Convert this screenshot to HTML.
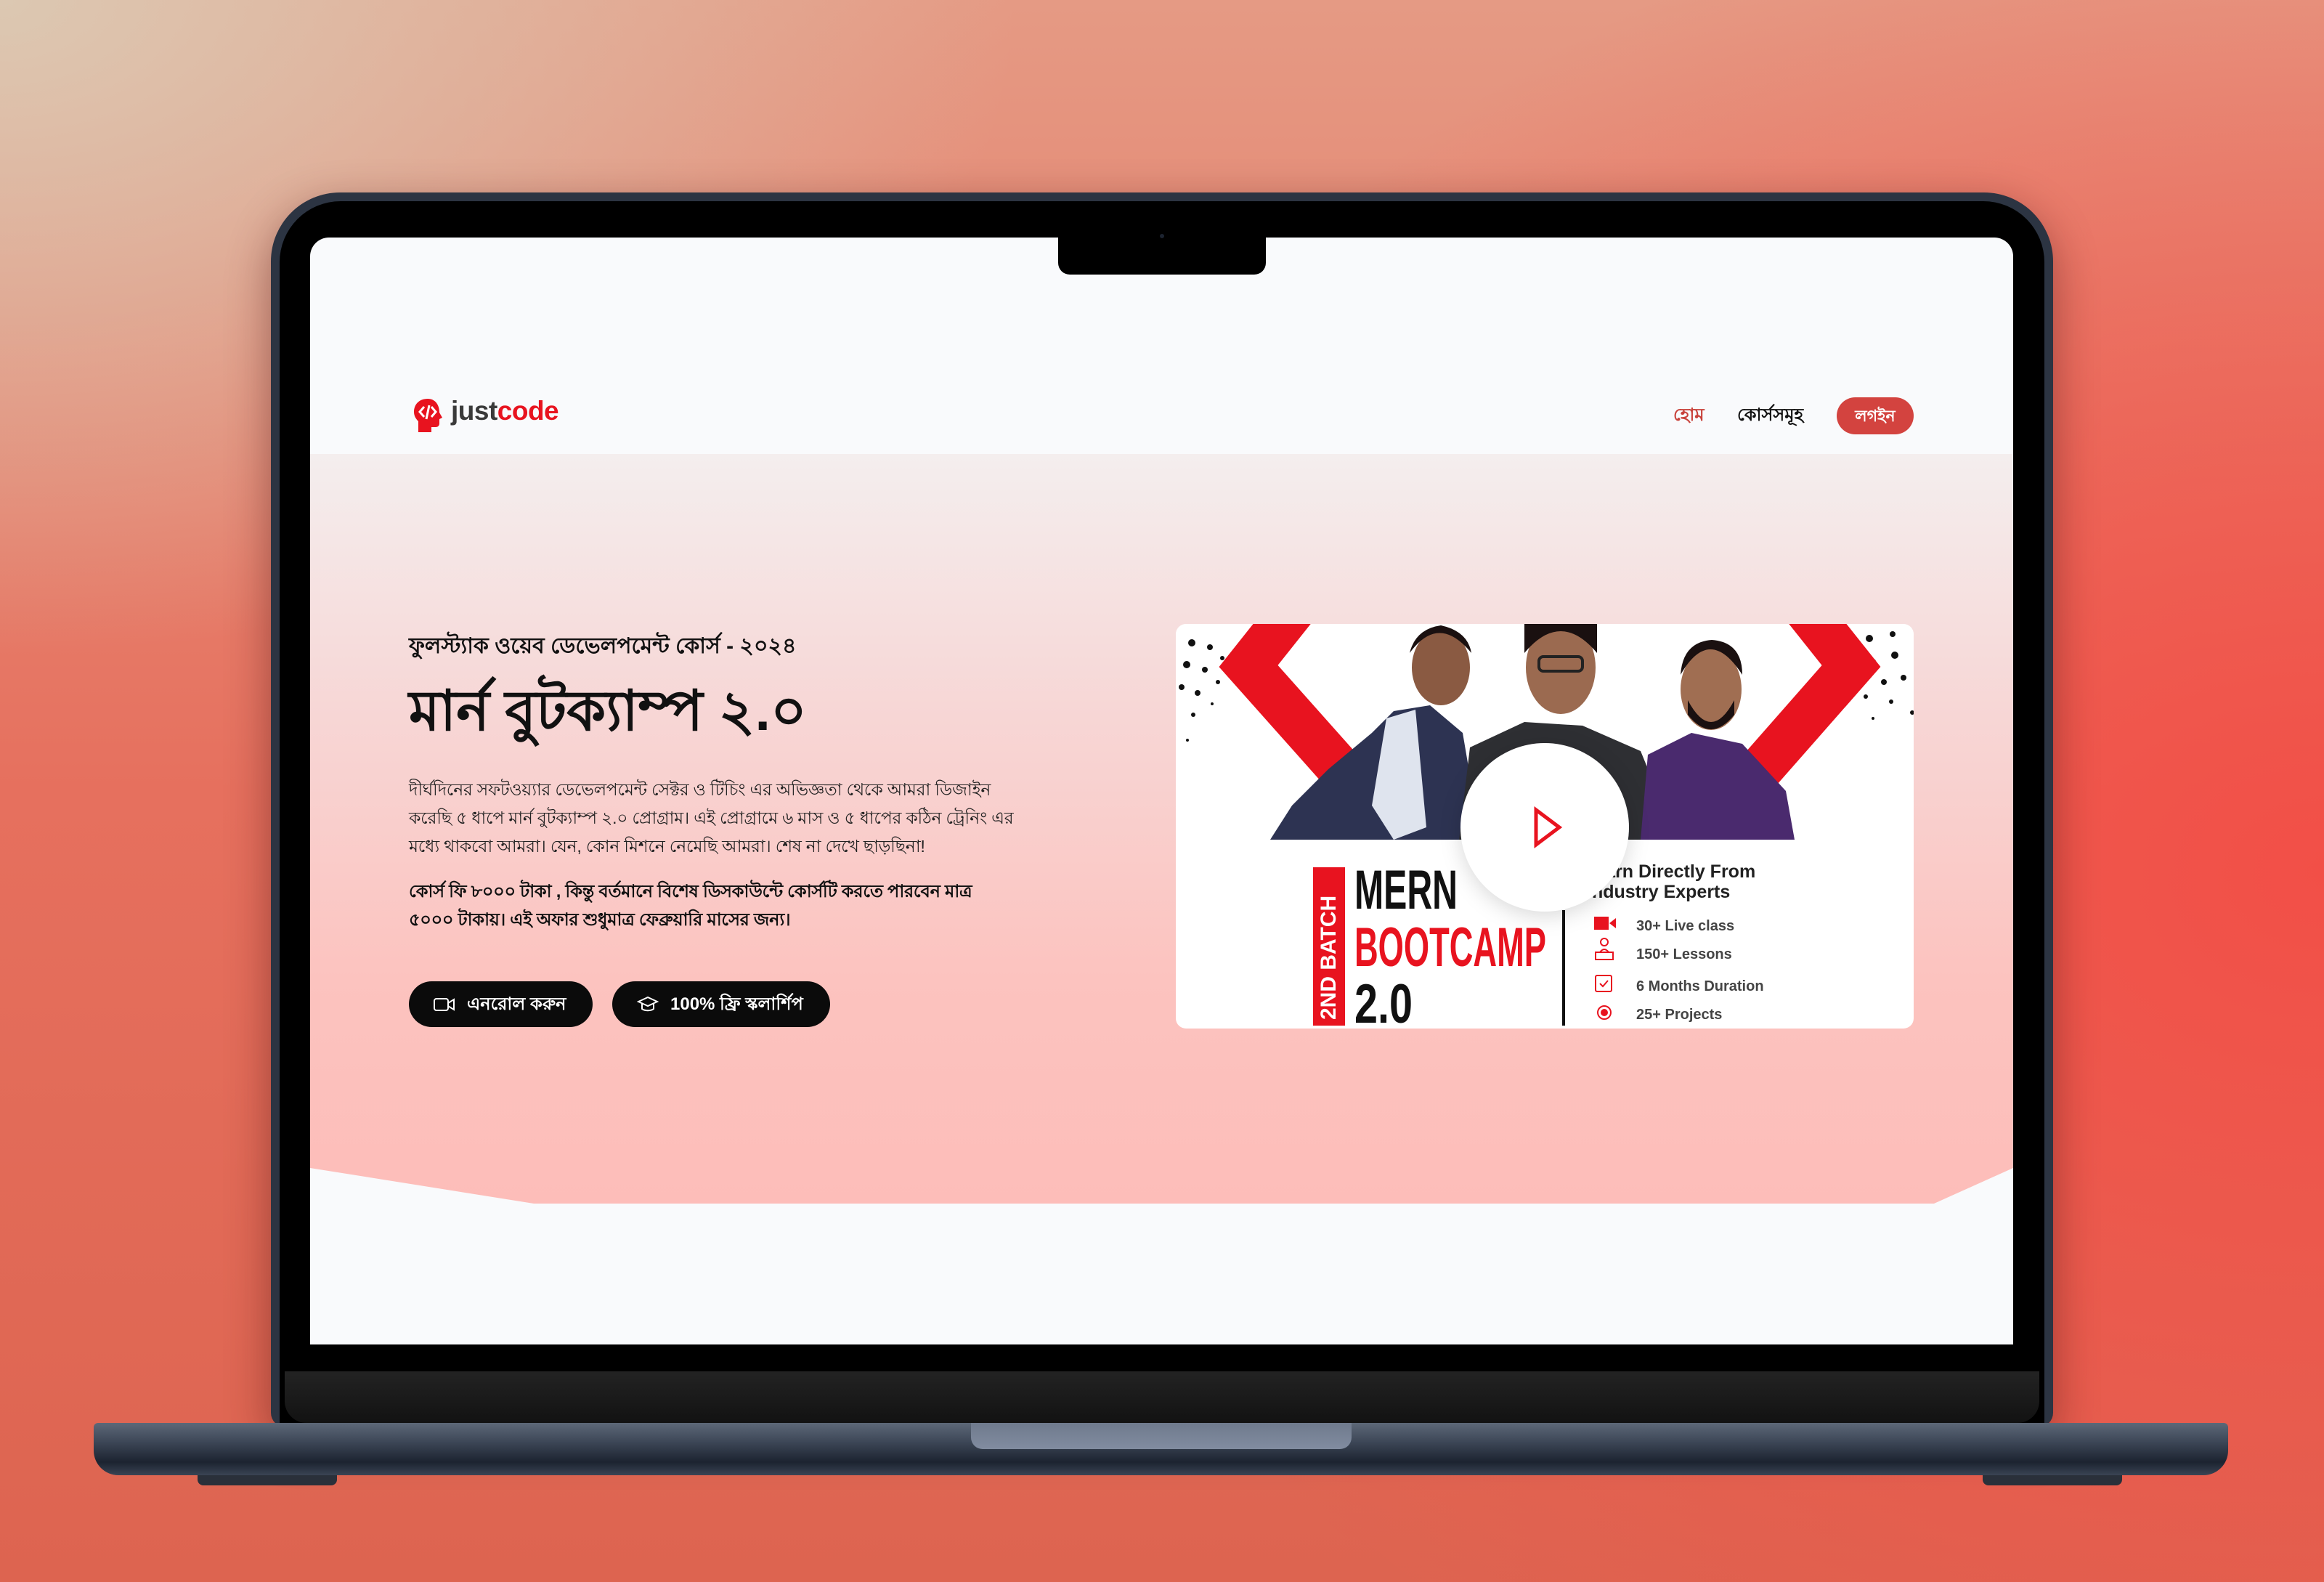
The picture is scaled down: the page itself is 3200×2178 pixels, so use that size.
<!DOCTYPE html>
<html><head><meta charset="utf-8"><style>
*{margin:0;padding:0;box-sizing:border-box}
body{width:3200px;height:2178px;overflow:hidden;position:relative;font-family:"Liberation Sans",sans-serif;
background:radial-gradient(ellipse 1400px 900px at 0px 0px,#dcc8b2 0%,rgba(220,200,178,0) 100%),
radial-gradient(ellipse 1800px 1400px at 3200px 1200px,#f24f47 0%,rgba(242,79,71,0) 100%),
linear-gradient(180deg,#e59a84 0%,#e6705e 50%,#dd6450 100%);}
.abs{position:absolute}
.bn{font-family:"Liberation Sans","Noto Sans CJK SC",sans-serif}
</style></head><body>
<div class="abs" style="left:373px;top:265px;width:2454px;height:1700px;background:#2c3442;border-radius:95px 95px 20px 20px;box-shadow:0 20px 60px rgba(70,15,15,.45)"></div>
<div class="abs" style="left:385px;top:277px;width:2430px;height:1690px;background:#000;border-radius:84px 84px 10px 10px"></div>
<div class="abs" style="left:392px;top:1888px;width:2416px;height:71px;background:linear-gradient(#232323,#121212);border-radius:0 0 30px 30px"></div>
<div class="abs" style="left:427px;top:327px;width:2345px;height:1524px;background:#f9fafc;border-radius:26px 26px 0 0;overflow:hidden">
  <div class="abs" style="left:0;top:298px;width:2345px;height:1032px;background:linear-gradient(180deg,#f4eeee 0%,#f7d6d5 35%,#fcc3bf 70%,#fdbdb9 100%)"></div>
  <svg class="abs" style="left:0;top:0" width="2345" height="1340"><polygon points="0,1281 308,1330 0,1330" fill="#f9fafc"/><polygon points="2236,1330 2345,1281 2345,1330" fill="#f9fafc"/></svg>
  <svg class="abs" style="left:140px;top:220px" width="44" height="50" viewBox="0 0 44 50"><path d="M22 2C10 2 3 10 3 20c0 6 3 10 6 13v15h18v-7h6c3 0 5-2 5-5v-6l4-2-4-7C38 10 32 2 22 2z" fill="#e8131f"/><path d="M17 13l-6 7 6 7M27 13l6 7-6 7M24 11l-4 19" stroke="#fff" stroke-width="3" fill="none"/></svg>
  <div class="abs" style="left:194px;top:218px;font-size:37px;font-weight:bold;color:#3a3a3a;letter-spacing:-0.5px">just<span style="color:#e8131f">code</span></div>
  <div class="abs bn" style="left:1877px;top:226px;font-size:24px;font-weight:bold;color:#c8413a">হোম</div>
  <div class="abs bn" style="left:1965px;top:226px;font-size:24px;font-weight:bold;color:#111">কোর্সসমূহ</div>
  <div class="abs bn" style="left:2102px;top:220px;width:106px;height:51px;border-radius:26px;background:#d3433f;color:#fff;font-size:22px;font-weight:bold;text-align:center;line-height:51px">লগইন</div>
  <div class="abs bn" style="left:136px;top:538px;font-size:30px;font-weight:bold;color:#111">ফুলস্ট্যাক ওয়েব ডেভেলপমেন্ট কোর্স - ২০২৪</div>
  <div class="abs bn" style="left:136px;top:592px;font-size:77px;font-weight:bold;color:#111">মার্ন বুটক্যাম্প ২.০</div>
  <div class="abs bn" style="left:136px;top:741px;width:850px;font-size:23.5px;line-height:39px;color:#222;letter-spacing:-0.3px">দীর্ঘদিনের সফটওয়্যার ডেভেলপমেন্ট সেক্টর ও টিচিং এর অভিজ্ঞতা থেকে আমরা ডিজাইন করেছি ৫ ধাপে মার্ন বুটক্যাম্প ২.০ প্রোগ্রাম। এই প্রোগ্রামে ৬ মাস ও ৫ ধাপের কঠিন ট্রেনিং এর মধ্যে থাকবো আমরা। যেন, কোন মিশনে নেমেছি আমরা। শেষ না দেখে ছাড়ছিনা!</div>
  <div class="abs bn" style="left:136px;top:881px;width:825px;font-size:24px;line-height:39px;font-weight:bold;color:#111;letter-spacing:-0.3px">কোর্স ফি ৮০০০ টাকা , কিন্তু বর্তমানে বিশেষ ডিসকাউন্টে কোর্সটি করতে পারবেন মাত্র ৫০০০ টাকায়। এই অফার শুধুমাত্র ফেব্রুয়ারি মাসের জন্য।</div>
  <div class="abs bn" style="left:136px;top:1024px;width:253px;height:63px;border-radius:32px;background:#0b0b0b;color:#fff;font-size:24px;font-weight:bold;line-height:63px;padding-left:80px">এনরোল করুন
    <svg class="abs" style="left:34px;top:21px" width="30" height="22"><rect x="1" y="3" width="19" height="16" rx="3" fill="none" stroke="#fff" stroke-width="2"/><path d="M20 9l8-5v14l-8-5" fill="none" stroke="#fff" stroke-width="2"/></svg></div>
  <div class="abs bn" style="left:416px;top:1024px;width:300px;height:63px;border-radius:32px;background:#0b0b0b;color:#fff;font-size:24px;font-weight:bold;line-height:63px;padding-left:80px">100% ফ্রি স্কলার্শিপ
    <svg class="abs" style="left:34px;top:19px" width="30" height="26"><path d="M2 9l13-6 13 6-13 6z" fill="none" stroke="#fff" stroke-width="2"/><path d="M7 12v7c4 3 12 3 16 0v-7" fill="none" stroke="#fff" stroke-width="2"/></svg></div>
  <div class="abs" style="left:1192px;top:532px;width:1016px;height:557px;background:#fff;border-radius:14px;overflow:hidden">
    <svg width="1016" height="557" viewBox="0 0 1016 557" style="position:absolute;left:0;top:0">
      <g fill="#111">
        <circle cx="22" cy="26" r="5"/><circle cx="47" cy="32" r="4"/><circle cx="15" cy="56" r="5"/><circle cx="40" cy="63" r="4"/><circle cx="64" cy="47" r="3"/><circle cx="8" cy="87" r="4"/><circle cx="30" cy="95" r="4"/><circle cx="58" cy="80" r="3"/><circle cx="24" cy="125" r="3"/><circle cx="50" cy="110" r="2"/><circle cx="16" cy="160" r="2"/>
        <circle cx="955" cy="20" r="5"/><circle cx="987" cy="14" r="4"/><circle cx="960" cy="52" r="4"/><circle cx="990" cy="43" r="5"/><circle cx="930" cy="41" r="3"/><circle cx="975" cy="80" r="4"/><circle cx="1002" cy="74" r="4"/><circle cx="950" cy="100" r="3"/><circle cx="985" cy="107" r="3"/><circle cx="1014" cy="122" r="3"/><circle cx="960" cy="130" r="2"/>
      </g>
      <polyline points="170,-30 100,58 262,240" fill="none" stroke="#e8131f" stroke-width="62"/>
      <polyline points="860,-30 930,58 770,240" fill="none" stroke="#e8131f" stroke-width="62"/>
      <path d="M130 297 L160 250 L210 200 L270 150 L300 120 L350 112 L395 150 L420 297Z" fill="#2d3352"/>
      <path d="M290 130 L330 118 L345 280 L300 297 L270 250Z" fill="#dfe4ee"/>
      <ellipse cx="365" cy="60" rx="40" ry="52" fill="#8a5a42"/><path d="M322 40 q40-55 85 0 q-5-30-42-38 q-35 5-43 38z" fill="#1a1010"/>
      <path d="M390 297 L405 170 L480 135 L560 140 L640 175 L690 297Z" fill="#2e2f33"/>
      <ellipse cx="530" cy="60" rx="48" ry="64" fill="#9b6a50"/><path d="M480 40 q50-60 100 0 l0-40 -100 0z" fill="#1a1010"/>
      <rect x="500" y="45" width="60" height="20" rx="6" fill="none" stroke="#222" stroke-width="4"/>
      <path d="M640 297 L650 180 L710 150 L780 165 L840 230 L852 297Z" fill="#4a2a6e"/>
      <ellipse cx="737" cy="90" rx="42" ry="56" fill="#a06e52"/><path d="M695 70 q40-70 85 0 q0-45-42-48 q-40 3-43 48z" fill="#1a1010"/><path d="M705 105 q32 60 64 0 v20 q-32 40-64 0z" fill="#1a1010"/>
      <rect x="189" y="335" width="44" height="218" fill="#e8131f"/>
      <text transform="translate(220,545) rotate(-90)" font-family="Liberation Sans Narrow,Liberation Sans,sans-serif" font-weight="bold" font-size="30" fill="#fff">2ND BATCH</text>
      <text x="246" y="392" font-family="Liberation Sans Narrow,Liberation Sans,sans-serif" font-weight="bold" font-size="76" fill="#111" textLength="142" lengthAdjust="spacingAndGlyphs">MERN</text>
      <text x="246" y="471" font-family="Liberation Sans Narrow,Liberation Sans,sans-serif" font-weight="bold" font-size="76" fill="#e8131f" textLength="264" lengthAdjust="spacingAndGlyphs">BOOTCAMP</text>
      <text x="246" y="549" font-family="Liberation Sans Narrow,Liberation Sans,sans-serif" font-weight="bold" font-size="76" fill="#111" textLength="80" lengthAdjust="spacingAndGlyphs">2.0</text>
      <rect x="532" y="394" width="4" height="159" fill="#111"/>
      <text x="562" y="349" font-family="Liberation Sans,sans-serif" font-weight="bold" font-size="25" fill="#222">Learn Directly From</text>
      <text x="566" y="377" font-family="Liberation Sans,sans-serif" font-weight="bold" font-size="25" fill="#222">Industry Experts</text>
      <g font-family="Liberation Sans,sans-serif" font-weight="bold" font-size="20" fill="#444">
        <text x="634" y="422">30+ Live class</text><text x="634" y="461">150+ Lessons</text><text x="634" y="505">6 Months Duration</text><text x="634" y="544">25+ Projects</text>
      </g>
      <rect x="576" y="403" width="20" height="18" fill="#e8131f"/><path d="M597 412l9-7v14z" fill="#e8131f"/>
      <g fill="none" stroke="#e8131f" stroke-width="2"><circle cx="590" cy="438" r="5"/><path d="M578 462v-10h24v10zM584 452q6-8 12 0"/><rect x="578" y="484" width="22" height="22" rx="2"/><path d="M584 495l4 4 7-8"/><circle cx="590" cy="535" r="9"/><circle cx="590" cy="535" r="4" fill="#e8131f"/></g>
      <circle cx="508" cy="280" r="116" fill="#fff" style="filter:drop-shadow(0 6px 14px rgba(0,0,0,.15))"/>
      <path d="M496 256 L528 280 L496 304Z" fill="none" stroke="#e8131f" stroke-width="5"/>
    </svg>
  </div>
</div>
<div class="abs" style="left:1457px;top:320px;width:286px;height:58px;background:#000;border-radius:0 0 16px 16px"></div>
<div class="abs" style="left:1597px;top:322px;width:6px;height:6px;border-radius:3px;background:#1c2330"></div>
<div class="abs" style="left:129px;top:1959px;width:2939px;height:72px;background:linear-gradient(180deg,#5d6878 0%,#3e4858 35%,#1c2330 75%,#3a4454 100%);border-radius:6px 6px 34px 34px"></div>
<div class="abs" style="left:1337px;top:1959px;width:524px;height:36px;background:linear-gradient(#6f7a8d,#818ca0);border-radius:0 0 16px 16px"></div>
<div class="abs" style="left:272px;top:2031px;width:192px;height:14px;background:#2a303a;border-radius:0 0 8px 8px"></div>
<div class="abs" style="left:2730px;top:2031px;width:192px;height:14px;background:#2a303a;border-radius:0 0 8px 8px"></div>
</body></html>
